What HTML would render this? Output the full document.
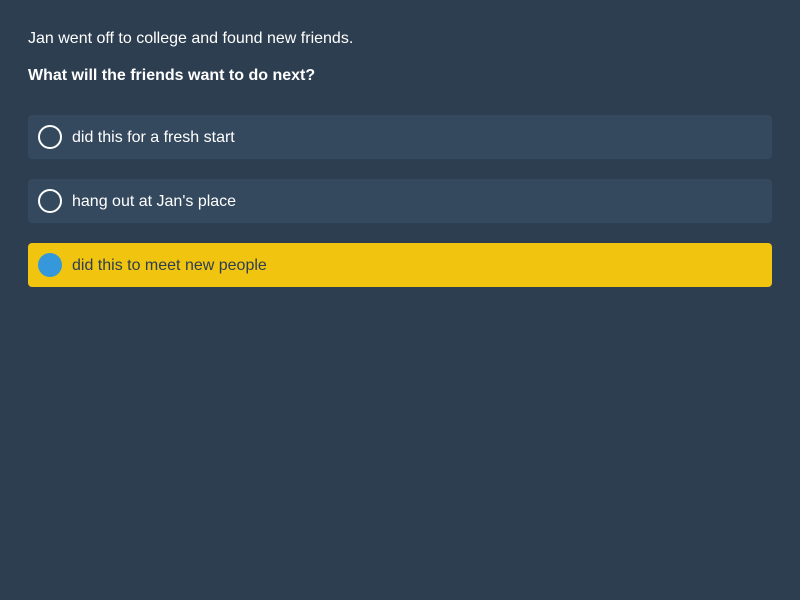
<!DOCTYPE html>
<html><head><style>
body{margin:0;background:#2d3e50;font-family:"Liberation Sans",sans-serif;width:800px;height:600px;overflow:hidden}
.p{position:absolute;left:28px;color:#fff;font-size:16px}
.o{position:absolute;left:28px;width:744px;height:44px;border-radius:4px;background:#34495e;color:#fff;font-size:16px}
.o span{position:absolute;left:44px;top:14px}
.c{position:absolute;left:10px;top:10px;width:24px;height:24px;border:2px solid #fff;border-radius:50%;box-sizing:border-box}
.s{background:#f1c40f;color:#2d3e50}
.s .c{border:none;background:#3498db}
</style></head><body>
<div class="p" style="top:30px">Jan went off to college and found new friends.</div>
<div class="p" style="top:67px;font-weight:bold">What will the friends want to do next?</div>
<div class="o" style="top:115px"><div class="c"></div><span>did this for a fresh start</span></div>
<div class="o" style="top:179px"><div class="c"></div><span>hang out at Jan's place</span></div>
<div class="o s" style="top:243px"><div class="c"></div><span>did this to meet new people</span></div>
</body></html>
